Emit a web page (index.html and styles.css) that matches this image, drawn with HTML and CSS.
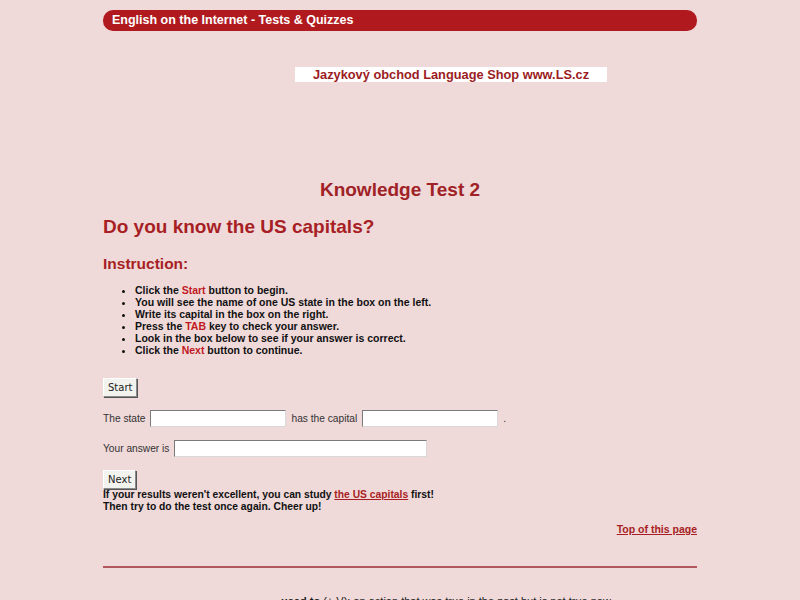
FILE: index.html
```html
<!DOCTYPE html>
<html>
<head>
<meta charset="utf-8">
<title>Knowledge Test 2</title>
<link rel="stylesheet" href="styles.css">
</head>
<body>
<div class="page">
  <div class="topbar">English on the Internet - Tests &amp; Quizzes</div>
  <div class="shop-row">
    <a class="shop" href="#">Jazykový obchod Language Shop www.LS.cz</a>
  </div>

  <h1 class="test-title">Knowledge Test 2</h1>
  <h2 class="question">Do you know the US capitals?</h2>
  <h3 class="instr">Instruction:</h3>
  <ul class="steps">
    <li>Click the <span class="hl">Start</span> button to begin.</li>
    <li>You will see the name of one US state in the box on the left.</li>
    <li>Write its capital in the box on the right.</li>
    <li>Press the <span class="hl">TAB</span> key to check your answer.</li>
    <li>Look in the box below to see if your answer is correct.</li>
    <li>Click the <span class="hl">Next</span> button to continue.</li>
  </ul>

  <form class="quiz">
    <div class="row"><button type="button" class="btn">Start</button></div>
    <div class="row fields">
      <span>The state</span><input class="box" type="text">
      <span>has the capital</span><input class="box" type="text">
      <span>.</span>
    </div>
    <div class="row fields">
      <span>Your answer is</span><input class="box wide" type="text">
    </div>
    <div class="row next"><button type="button" class="btn">Next</button></div>
  </form>

  <p class="note">If your results weren't excellent, you can study <a href="#">the US capitals</a> first!<br>Then try to do the test once again. Cheer up!</p>

  <div class="top-link"><a href="#">Top of this page</a></div>
  <hr class="rule">
  <p class="def"><b>used to</b> (+ V): an action that was true in the past but is not true now.</p>
</div>
</body>
</html>
```
FILE: styles.css
```css
html, body {
  margin: 0;
  padding: 0;
  background: #efd9d9;
}
body {
  font-family: "Liberation Sans", Arial, sans-serif;
  color: #111;
}
.page {
  width: 594px;
  margin: 0 auto;
  padding-top: 10px;
}
.topbar {
  background: #b01a1e;
  color: #fff;
  font-weight: bold;
  font-size: 12.5px;
  height: 21px;
  line-height: 21px;
  border-radius: 10px;
  padding-left: 9px;
}
.shop-row {
  display: flex;
  padding: 36px 0 0 192px;
  height: 15px;
}
.shop {
  display: block;
  background: #fff;
  color: #9b1c22;
  font-weight: bold;
  font-size: 12.8px;
  line-height: 15px;
  width: 312px;
  text-align: center;
  text-decoration: none;
}
.test-title {
  margin: 96px 0 0;
  text-align: center;
  font-size: 19px;
  line-height: 24px;
  color: #a02226;
}
.question {
  margin: 13px 0 0;
  font-size: 19px;
  line-height: 24px;
  color: #a71f24;
}
.instr {
  margin: 15px 0 0;
  font-size: 15.5px;
  line-height: 20px;
  color: #a71f24;
}
.steps {
  margin: 10px 0 0;
  padding-left: 32px;
  font-size: 10.5px;
  font-weight: bold;
  line-height: 12px;
}
.hl {
  color: #c0191f;
}
.quiz {
  margin-top: 22px;
  font-family: "Liberation Sans", Tahoma, sans-serif;
  font-size: 10.2px;
  color: #333;
}
.row {
  display: flex;
  align-items: center;
  gap: 5px;
}
.fields {
  margin-top: 13px;
  height: 17px;
}
.next {
  margin-top: 13px;
}
.btn {
  font-family: "DejaVu Sans", Tahoma, sans-serif;
  font-size: 10px;
  color: #222;
  background: #f2f2ee;
  border: 1px solid;
  border-color: #fff #8a8a8a #8a8a8a #fff;
  box-shadow: 1px 1px 0 #555;
  padding: 2px 4px;
  height: 19px;
  margin: 0;
}
.box {
  width: 132px;
  height: 13px;
  padding: 1px;
  border: 1px solid;
  border-color: #7a7a7a #d8d8d8 #d8d8d8 #7a7a7a;
  background: #fff;
  margin: 0;
}
.box.wide {
  width: 249px;
}
.note {
  margin: 0;
  font-size: 10.3px;
  font-weight: bold;
  line-height: 12px;
}
.note a, .top-link a {
  color: #a71f24;
}
.top-link {
  margin-top: 10px;
  text-align: right;
  font-size: 10.5px;
  font-weight: bold;
  line-height: 12px;
}
.rule {
  margin: 31px 0 0;
  border: 0;
  height: 2px;
  background: #b2585c;
}
.def {
  margin: 27px 0 0 178px;
  font-size: 11px;
  line-height: 12px;
  color: #222;
}
```
